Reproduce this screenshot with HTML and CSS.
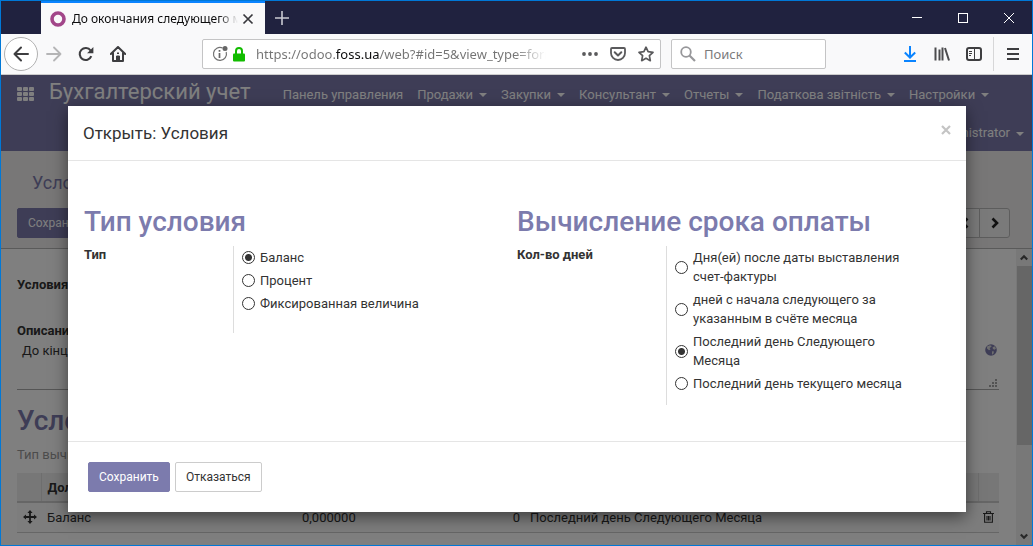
FILE: index.html
```html
<!DOCTYPE html>
<html lang="ru">
<head>
<meta charset="utf-8">
<title>До окончания следующего месяца</title>
<link rel="stylesheet" href="styles.css">
</head>
<body>
<div class="window">
  <header class="tabbar">
    <div class="tab">
      <svg class="favicon" width="16" height="16" viewBox="0 0 16 16"><circle cx="8" cy="8" r="6" fill="none" stroke="#a24689" stroke-width="3.6"/></svg>
      <span class="tab-title">До окончания следующего месяца</span>
      <button class="icon-btn tab-close" aria-label="Закрыть вкладку"><svg width="12" height="12" viewBox="0 0 12 12"><path d="M1.5 1.5l9 9M10.5 1.5l-9 9" stroke="#38383d" stroke-width="1.7"/></svg></button>
    </div>
    <button class="icon-btn new-tab" aria-label="Новая вкладка"><svg width="14" height="14" viewBox="0 0 14 14"><path d="M7 0v14M0 7h14" stroke="#c9cad2" stroke-width="1.6"/></svg></button>
    <div class="window-controls">
      <button class="icon-btn" aria-label="Свернуть"><svg width="10" height="10" viewBox="0 0 10 10"><path d="M0 4.5h10" stroke="#fff"/></svg></button>
      <button class="icon-btn" aria-label="Развернуть"><svg width="10" height="10" viewBox="0 0 10 10"><rect x=".5" y=".5" width="9" height="9" fill="none" stroke="#fff"/></svg></button>
      <button class="icon-btn" aria-label="Закрыть"><svg width="10" height="10" viewBox="0 0 10 10"><path d="M0 0l10 10M10 0L0 10" stroke="#fff"/></svg></button>
    </div>
  </header>

  <div class="toolbar">
    <button class="icon-btn back" aria-label="Назад"><svg width="16" height="16" viewBox="0 0 16 16"><path d="M15 8H1.500M8 1.500L1.500 8 8 14.500" fill="none" stroke="#3e3e40" stroke-width="2" stroke-linecap="round" stroke-linejoin="round"/></svg></button>
    <button class="icon-btn nav-btn" aria-label="Вперёд"><svg width="16" height="16" viewBox="0 0 16 16"><path d="M1 8h13.500M8 1.500L14.500 8 8 14.500" fill="none" stroke="#b5b5b6" stroke-width="1.800" stroke-linecap="round" stroke-linejoin="round"/></svg></button>
    <button class="icon-btn nav-btn" aria-label="Обновить"><svg width="16" height="16" viewBox="0 0 16 16"><path d="M13.300 10.200A6 6 0 1 1 12.600 4.500" fill="none" stroke="#3e3e40" stroke-width="2.100"/><path d="M15.400 1v6.300H9.100z" fill="#3e3e40"/></svg></button>
    <button class="icon-btn nav-btn" aria-label="Домой"><svg width="16" height="16" viewBox="0 0 16 16"><path d="M.8 8L8 1l7.200 7M3 7v8h10V7" fill="none" stroke="#3e3e40" stroke-width="2" stroke-linejoin="round" stroke-linecap="round"/><path d="M6.500 15v-5h3v5" fill="#3e3e40" stroke="#3e3e40"/><path d="M7 6.500h2v1.500H7z" fill="#3e3e40"/></svg></button>
    <div class="urlbar">
      <svg width="16" height="16" viewBox="0 0 16 16"><path d="M10.500 1.900A6.500 6.500 0 1 0 14.200 6" fill="none" stroke="#737373" stroke-width="1.200"/><circle cx="13" cy="2.600" r="2.500" fill="#666"/><path d="M7.500 4v1.800M7.500 7v5" stroke="#666" stroke-width="1.700"/></svg>
      <svg class="lock" width="12" height="15" viewBox="0 0 12 15"><path d="M3 8V4a3 3 0 0 1 6 0v4" fill="none" stroke="#12bc00" stroke-width="2"/><rect y="6.500" width="12" height="8" rx="1" fill="#12bc00"/></svg>
      <input class="url" type="text" aria-label="Адрес" value="https://odoo.foss.ua/web?#id=5&amp;view_type=form">
      <svg width="16" height="16" viewBox="0 0 16 16"><g fill="#5a5a5c"><circle cx="2" cy="8" r="1.900"/><circle cx="8" cy="8" r="1.900"/><circle cx="14" cy="8" r="1.900"/></g></svg>
      <svg width="16" height="16" viewBox="0 0 16 16"><path d="M2 2h12a1 1 0 0 1 1 1v4a7 7 0 0 1-14 0V3a1 1 0 0 1 1-1z" fill="none" stroke="#5a5a5c" stroke-width="1.800"/><path d="M4.700 6.300L8 9.500l3.300-3.200" fill="none" stroke="#5a5a5c" stroke-width="2" stroke-linecap="round" stroke-linejoin="round"/></svg>
      <svg width="16" height="16" viewBox="0 0 16 16"><path d="M8 1.200l2.100 4.500 4.900.6-3.600 3.400.9 5L8 12.300l-4.300 2.400.9-5L1 6.300l4.900-.6z" fill="none" stroke="#5a5a5c" stroke-width="1.700" stroke-linejoin="round"/></svg>
    </div>
    <div class="searchbar">
      <svg width="16" height="16" viewBox="0 0 16 16"><circle cx="6" cy="6" r="4.800" fill="none" stroke="#97979a" stroke-width="1.800"/><path d="M9.500 9.500l5.500 5.500" stroke="#97979a" stroke-width="2.200"/></svg>
      <input class="search" type="text" aria-label="Поиск" placeholder="Поиск">
    </div>
    <div class="tools">
      <button class="icon-btn" aria-label="Загрузки"><svg width="16" height="16" viewBox="0 0 16 16"><path d="M8 0v11M2.800 6.500L8 11.500l5.200-5M2 15h12" fill="none" stroke="#0a84ff" stroke-width="2"/></svg></button>
      <button class="icon-btn" aria-label="Библиотека"><svg width="16" height="16" viewBox="0 0 16 16"><path d="M1.500 1.500v13M5.500 3.500v11M8.500 1.500v13M11 2l4 12.500" fill="none" stroke="#4c4c4e" stroke-width="2"/></svg></button>
      <button class="icon-btn" aria-label="Боковая панель"><svg width="16" height="16" viewBox="0 0 16 16"><rect x="1" y="2" width="14" height="12" rx="2" fill="none" stroke="#3e3e40" stroke-width="2"/><path d="M8.500 2v12" stroke="#3e3e40"/><path d="M3 5.500h3M3 7.500h3M3 9.500h2" stroke="#3e3e40"/></svg></button>
      <span class="tool-sep"></span>
      <button class="icon-btn" aria-label="Меню"><svg width="12" height="12" viewBox="0 0 12 12"><path d="M0 1h12M0 6h12M0 11h12" stroke="#3e3e40" stroke-width="2"/></svg></button>
    </div>
  </div>

  <main class="page">
    <nav class="navbar">
      <div class="nav-row">
        <button class="icon-btn apps" aria-label="Приложения"><svg width="18" height="14" viewBox="0 0 18 14"><g fill="#fff"><rect width="5" height="4" rx="1"/><rect x="6" width="5" height="4" rx="1"/><rect x="12" width="5" height="4" rx="1"/><rect y="5" width="5" height="4" rx="1"/><rect x="6" y="5" width="5" height="4" rx="1"/><rect x="12" y="5" width="5" height="4" rx="1"/><rect y="10" width="5" height="4" rx="1"/><rect x="6" y="10" width="5" height="4" rx="1"/><rect x="12" y="10" width="5" height="4" rx="1"/></g></svg></button>
        <a class="brand" href="#">Бухгалтерский учет</a>
        <div class="menu">
          <a href="#">Панель управления</a>
          <a class="drop" href="#">Продажи</a>
          <a class="drop" href="#">Закупки</a>
          <a class="drop" href="#">Консультант</a>
          <a class="drop" href="#">Отчеты</a>
          <a class="drop" href="#">Податкова звітність</a>
          <a class="drop" href="#">Настройки</a>
        </div>
      </div>
      <div class="user-row"><a class="drop" href="#">Administrator</a></div>
    </nav>

    <section class="control-panel">
      <a class="crumb" href="#">Условия</a>
      <div class="panel-actions">
        <button class="btn primary">Сохранить</button>
        <div class="pager">
          <button class="pager-btn" aria-label="Предыдущая"><svg width="10" height="12" viewBox="0 0 10 12"><path d="M7.500 1.500L3 6l4.500 4.500" fill="none" stroke="#222" stroke-width="2.600"/></svg></button>
          <button class="pager-btn" aria-label="Следующая"><svg width="10" height="12" viewBox="0 0 10 12"><path d="M2.500 1.500L7 6l-4.500 4.500" fill="none" stroke="#222" stroke-width="2.600"/></svg></button>
        </div>
      </div>
    </section>

    <section class="viewport">
      <div class="sheet">
        <strong class="field-label">Условия</strong>
        <strong class="field-label">Описание</strong>
        <div class="description">
          <span>До кінця</span>
          <div class="description-tools">
            <svg width="12" height="12" viewBox="0 0 12 12"><circle cx="6" cy="6" r="5.800" fill="#7c7bad"/><path d="M2 2.500l3-1.300 1.800.8-1 1.300L4.500 4l1 1.500-1.500.8-2-1.800zM7.500 3.500l2-1.300 1.500 2-1.300 1.500-1.700-.6zM7 7.300l2 .2-.6 2.300L7 10.800z" fill="#ddd"/></svg>
            <svg width="8" height="8" viewBox="0 0 8 8"><g fill="#a6a6a6"><path d="M6 0h2v2H6zM6 3h2v2H6zM6 6h2v2H6zM3 3h2v2H3zM3 6h2v2H3zM0 6h2v2H0z"/></g></svg>
          </div>
        </div>
        <h2 class="heading sheet-heading">Условия</h2>
        <p class="hint">Тип вычисления</p>
        <table class="lines">
          <thead><tr><th class="c-handle"></th><th class="c-due">Должен</th><th class="c-value"></th><th class="c-days"></th><th></th><th class="c-trash"></th></tr></thead>
          <tbody>
            <tr>
              <td><svg class="move" width="14" height="14" viewBox="0 0 14 14"><path d="M7 1v12M1 7h12" stroke="#333" stroke-width="1.800"/><path d="M7 0l2.600 3H4.400zM7 14l2.600-3H4.400zM0 7l3-2.600v5.200zM14 7l-3-2.600v5.200z" fill="#333"/></svg></td>
              <td>Баланс</td><td>0,000000</td><td class="num">0</td><td>Последний день Следующего Месяца</td>
              <td class="trash"><button class="icon-btn" aria-label="Удалить"><svg width="11" height="12" viewBox="0 0 11 12"><path d="M0 2.500h11M3.500 2.500V.7h4v1.800M1.600 3v8.300h7.800V3M4 5v4.500M5.500 5v4.500M7 5v4.500" fill="none" stroke="#333" stroke-width="1.100"/></svg></button></td>
            </tr>
          </tbody>
        </table>
        <a class="add-line" href="#">Добавить</a>
      </div>
      <div class="scrollbar">
        <svg width="8" height="7" viewBox="0 0 8 7"><path d="M.8 5.500L4 2.300l3.200 3.200" fill="none" stroke="#505050" stroke-width="2.200"/></svg>
        <span class="thumb"></span>
        <svg width="8" height="7" viewBox="0 0 8 7"><path d="M.8 1.500L4 4.700l3.200-3.200" fill="none" stroke="#505050" stroke-width="2.200"/></svg>
      </div>
    </section>

    <div class="backdrop">
      <div class="modal" role="dialog" aria-labelledby="dlg-title">
        <header class="modal-header">
          <h1 class="modal-title" id="dlg-title">Открыть: Условия</h1>
          <button class="icon-btn modal-close" aria-label="Закрыть"><svg width="10" height="10" viewBox="0 0 10 10"><path d="M1 1l8 8M9 1L1 9" stroke="#c4c4c4" stroke-width="2.200"/></svg></button>
        </header>
        <div class="modal-body">
          <section class="group">
            <h2 class="heading">Тип условия</h2>
            <div class="field">
              <strong class="name" id="l-type">Тип</strong>
              <div class="options" role="radiogroup" aria-labelledby="l-type">
                <label class="option"><input type="radio" name="type" checked><span>Баланс</span></label>
                <label class="option"><input type="radio" name="type"><span>Процент</span></label>
                <label class="option"><input type="radio" name="type"><span>Фиксированная величина</span></label>
              </div>
            </div>
          </section>
          <section class="group">
            <h2 class="heading">Вычисление срока оплаты</h2>
            <div class="field">
              <strong class="name" id="l-days">Кол-во дней</strong>
              <div class="options" role="radiogroup" aria-labelledby="l-days">
                <label class="option"><input type="radio" name="days"><span>Дня(ей) после даты выставления счет-фактуры</span></label>
                <label class="option"><input type="radio" name="days"><span>дней с начала следующего за указанным в счёте месяца</span></label>
                <label class="option"><input type="radio" name="days" checked><span>Последний день Следующего Месяца</span></label>
                <label class="option"><input type="radio" name="days"><span>Последний день текущего месяца</span></label>
              </div>
            </div>
          </section>
        </div>
        <footer class="modal-footer">
          <button class="btn primary">Сохранить</button>
          <button class="btn">Отказаться</button>
        </footer>
      </div>
    </div>
  </main>
</div>
</body>
</html>
```

FILE: styles.css
```css
* { box-sizing: border-box; }
body {
  margin: 0;
  font: 13px/19px Roboto, "Liberation Sans", sans-serif;
  color: #333;
}
a { color: inherit; text-decoration: none; }
svg { display: block; flex: none; }
button, input { font: inherit; color: inherit; }
.icon-btn {
  display: flex; align-items: center; justify-content: center;
  padding: 0; border: 0; background: none;
}
.window {
  display: flex; flex-direction: column;
  height: 100vh; overflow: hidden;
  border: 1px solid #0078d7;
}

/* Browser tabs */
.tabbar { display: flex; flex: none; height: 33px; background: #20223f; font-family: "Noto Sans", sans-serif; }
.tab {
  display: flex; align-items: center;
  width: 224px; margin-left: 40px; padding: 0 11px 0 9px;
  border-top: 2px solid #0a84ff; background: #f9f9fa;
}
.favicon { margin-right: 6px; }
.tab-title {
  flex: 1; overflow: hidden; white-space: nowrap;
  font-size: 12px; color: #0c0c0d;
  mask-image: linear-gradient(to left, transparent, #000 20px);
}
.tab-close { margin-left: 4px; }
.new-tab { width: 34px; }
.window-controls { display: flex; margin-left: auto; }
.window-controls button { width: 46px; }

/* Browser toolbar */
.toolbar {
  display: flex; align-items: center; flex: none;
  height: 41px; padding: 0 13px 0 3px;
  background: #f9f9fa; border-bottom: 1px solid #ccc;
  font-family: "Noto Sans", sans-serif;
}
.back { width: 34px; height: 34px; border: 1px solid #b1b1b1; border-radius: 50%; background: #fff; }
.nav-btn { width: 32px; }
.urlbar, .searchbar {
  display: flex; align-items: center;
  height: 30px; border: 1px solid #c4c4c5; border-radius: 2px; background: #fff;
}
.urlbar { flex: 1; gap: 12px; margin-left: 68px; padding: 0 6px 0 9px; }
.lock { margin-left: -7px; }
.url, .search { min-width: 0; border: 0; padding: 0; background: none; outline: 0; }
.url {
  flex: 1; margin-left: -1px; margin-right: 24px; overflow: hidden;
  color: transparent;
  background: linear-gradient(90deg, #737373 80px, #0c0c0d 80px 124px, #737373 124px calc(100% - 32px), transparent);
  background-clip: text; -webkit-background-clip: text;
}
.searchbar { width: 155px; margin-left: 10px; padding: 0 8px; gap: 8px; }
.search { flex: 1; }
.search::placeholder { color: #7b7b7c; opacity: 1; }
.tools { display: flex; align-items: center; gap: 16px; margin-left: 76px; }
.tool-sep { width: 1px; height: 34px; margin: 0 -3px 0 -5px; background: #d7d7d8; }

/* Application */
.page { position: relative; display: flex; flex: 1; flex-direction: column; min-height: 0; }
.navbar { flex: none; padding: 0 8px 9px 16px; background: #7c7bad; color: #fff; }
.nav-row { display: flex; align-items: center; height: 38px; }
.brand { margin: -4px 32px 0 14px; font-size: 22px; line-height: 32px; white-space: nowrap; }
.menu { display: flex; gap: 14px; white-space: nowrap; }
.drop::after {
  content: ""; display: inline-block; margin-left: 6px; vertical-align: middle;
  border: 4px solid transparent; border-top-color: currentColor; border-bottom: 0;
}
.user-row { display: flex; justify-content: flex-end; padding-top: 10px; }

.control-panel {
  flex: none; height: 98px; padding: 20px 22px 10px 16px;
  background: #f0eeee; border-bottom: 1px solid #b5b5b5;
}
.crumb { display: block; margin-left: 15px; font-size: 18px; line-height: 24px; color: #7c7bad; }
.panel-actions { display: flex; justify-content: space-between; margin-top: 13px; }
.btn {
  height: 30px; padding: 0 10px; font-size: 12px;
  border: 1px solid #ccc; border-radius: 2px; background: #fff; color: #333;
}
.primary { border-color: #7c7bad; background: #7c7bad; color: #fff; }
.pager { display: flex; }
.pager-btn {
  display: flex; align-items: center; justify-content: center;
  width: 31px; height: 30px; margin-left: -1px; padding: 0;
  border: 1px solid #bbb; background: #f5f5f5;
}
.pager-btn:last-child { border-radius: 0 3px 3px 0; }

.viewport { display: flex; flex: 1; min-height: 0; }
.sheet { flex: 1; overflow: hidden; padding: 26px 17px 0 16px; background: #fff; }
.field-label { display: block; margin-bottom: 27px; }
.field-label + .field-label { margin-bottom: 1px; }
.description {
  display: flex; justify-content: space-between;
  height: 49px; padding-left: 5px; border-bottom: 1px solid #aaa;
}
.description-tools { display: flex; flex-direction: column; align-items: flex-end; justify-content: space-between; padding: 3px 2px 2px; }
.heading { margin: 0; font-size: 28px; line-height: 32px; font-weight: 500; color: #7c7bad; white-space: nowrap; }
.sheet-heading { margin-top: 15px; }
.hint { margin: 8px 0 9px; color: #999; }
.lines { width: 100%; border-collapse: collapse; table-layout: fixed; }
.lines th { height: 29px; padding: 0 6px; text-align: left; background: #eee; border-right: 1px solid #ddd; border-bottom: 2px solid #ccc; }
.lines th:last-child { border-right: 0; }
.lines td { height: 30px; padding: 0 6px; border-bottom: 1px solid #ccc; background: #fafafa; }
.lines .c-due, .lines .c-value, .lines .c-days { border-right: 0; }
.c-handle { width: 24px; }
.c-due { width: 255px; }
.c-value { width: 130px; }
.c-days { width: 98px; }
.c-trash { width: 21px; }
.lines .num { padding-right: 4px; text-align: right; }
.lines .trash { padding: 0 5px; }
.add-line { display: block; padding: 8px; color: #7c7bad; }

.scrollbar {
  display: flex; flex-direction: column; align-items: center;
  width: 16px; padding: 5px 0; background: #f0f0f0;
}
.thumb { width: 15px; height: 179px; margin: 5px 0 auto; background: #cdcdcd; }

/* Dialog */
.backdrop { position: absolute; inset: 0; padding: 31px 66px 0 67px; background: rgba(0, 0, 0, .5); }
.modal { background: #fff; box-shadow: 0 5px 15px rgba(0, 0, 0, .5); }
.modal-header {
  display: flex; justify-content: space-between;
  padding: 15px; border-bottom: 1px solid #e5e5e5;
}
.modal-title { margin: 0; font-size: 17px; line-height: 24px; font-weight: 400; }
.modal-close { height: 18px; }
.modal-body { display: grid; grid-template-columns: 1fr 1fr; padding: 45px 16px 36px; }
.field { display: grid; grid-template-columns: 149px 1fr; margin-top: 8px; }
.name { font-weight: 700; line-height: 17px; }
.options {
  display: flex; flex-direction: column; gap: 4px;
  min-height: 87px; padding: 2px 36px 12px 8px; border-left: 1px solid #ddd;
}
.option { display: flex; align-items: center; gap: 5px; }
.option input {
  appearance: none; flex: none; width: 13px; height: 13px; margin: 0;
  border: 1px solid #333; border-radius: 50%; background: #fff;
}
.option input:checked { background: radial-gradient(circle, #333 3px, #fff 4px); }
.modal-footer { display: flex; gap: 5px; padding: 20px; border-top: 1px solid #e5e5e5; }
```
